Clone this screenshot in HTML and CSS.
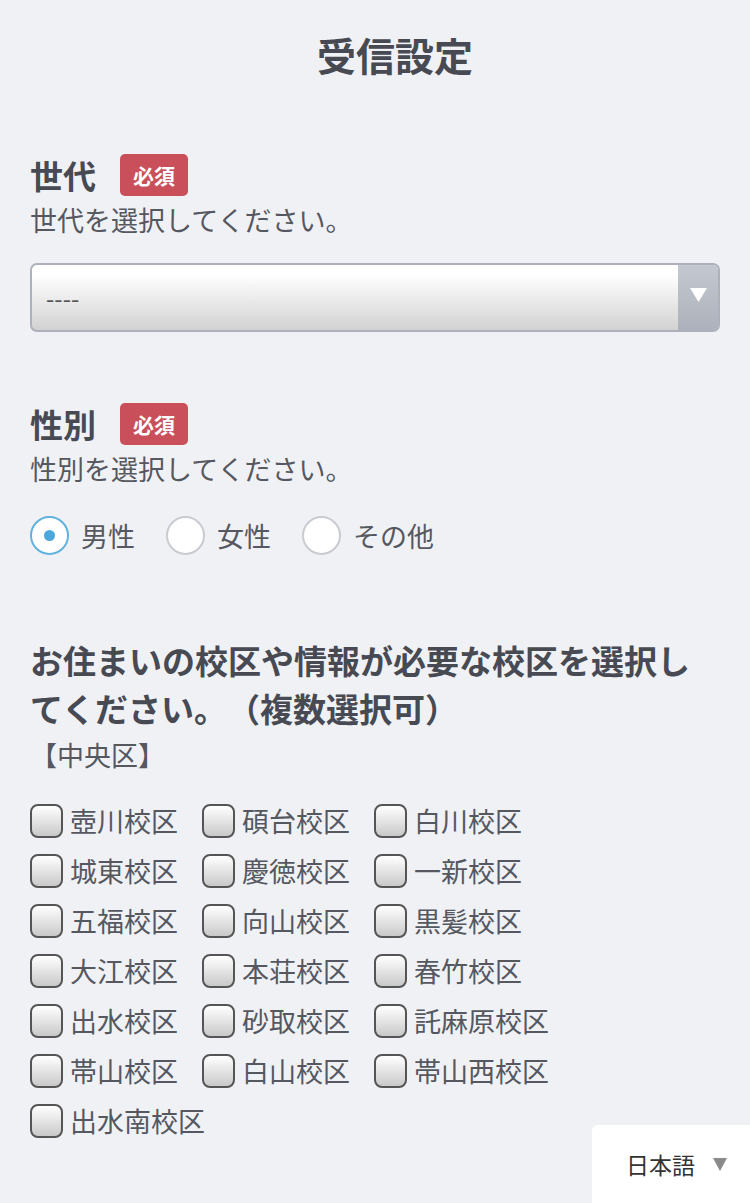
FILE: index.html
```html
<!DOCTYPE html>
<html lang="ja">
<head>
  <meta charset="UTF-8" />
  <title>受信設定</title>
  <link rel="stylesheet" href="styles.css">
</head>
<body>

  <h1 class="title">受信設定</h1>

  <div class="field field-generation">
    <div class="field-head">
      <h2>世代</h2>
      <span class="badge">必須</span>
    </div>
    <p class="note">世代を選択してください。</p>
    <div class="select">
      <span class="select-value">----</span>
      <span class="select-arrow">
        <svg width="17" height="14" viewBox="0 0 17 14"><path d="M0 0 H17 L8.5 14 Z" fill="#fff"/></svg>
      </span>
    </div>
  </div>

  <div class="field field-gender">
    <div class="field-head">
      <h2>性別</h2>
      <span class="badge">必須</span>
    </div>
    <p class="note">性別を選択してください。</p>
    <div class="radios">
      <label class="radio"><span class="radio-mark checked"></span>男性</label>
      <label class="radio"><span class="radio-mark"></span>女性</label>
      <label class="radio"><span class="radio-mark"></span>その他</label>
    </div>
  </div>

  <div class="field field-school">
    <h2 class="long">お住まいの校区や情報が必要な校区を選択してください。（複数選択可）</h2>
    <p class="area">【中央区】</p>
    <div class="checks">
      <label class="check"><span class="box"></span>壺川校区</label>
      <label class="check"><span class="box"></span>碩台校区</label>
      <label class="check"><span class="box"></span>白川校区</label>
      <label class="check"><span class="box"></span>城東校区</label>
      <label class="check"><span class="box"></span>慶徳校区</label>
      <label class="check"><span class="box"></span>一新校区</label>
      <label class="check"><span class="box"></span>五福校区</label>
      <label class="check"><span class="box"></span>向山校区</label>
      <label class="check"><span class="box"></span>黒髪校区</label>
      <label class="check"><span class="box"></span>大江校区</label>
      <label class="check"><span class="box"></span>本荘校区</label>
      <label class="check"><span class="box"></span>春竹校区</label>
      <label class="check"><span class="box"></span>出水校区</label>
      <label class="check"><span class="box"></span>砂取校区</label>
      <label class="check"><span class="box"></span>託麻原校区</label>
      <label class="check"><span class="box"></span>帯山校区</label>
      <label class="check"><span class="box"></span>白山校区</label>
      <label class="check"><span class="box"></span>帯山西校区</label>
      <label class="check"><span class="box"></span>出水南校区</label>
    </div>
  </div>

  <div class="lang">
    <span>日本語</span>
    <svg width="14" height="13" viewBox="0 0 14 13"><path d="M0 0 H14 L7 13 Z" fill="#8a8a8a"/></svg>
  </div>

</body>
</html>
```

FILE: styles.css
```css
body {
  font-family: "Noto Sans CJK JP", "Noto Sans", sans-serif;
  background: #f0f1f5;
  color: #555860;
  margin: 0;
  padding: 0 30px;
  min-height: 1203px;
  box-sizing: border-box;
  text-spacing-trim: space-all;
}

.title {
  margin: 0;
  padding: 29px 0 0 40px;
  font-size: 39px;
  line-height: 50px;
  text-align: center;
  color: #474a53;
  font-weight: bold;
}

.field-generation {
  margin-top: 75px;
}

.field-head {
  display: flex;
  align-items: center;
  height: 42px;
}

h2 {
  margin: 0;
  font-size: 33px;
  line-height: 42px;
  color: #474a53;
  font-weight: bold;
}

.badge {
  margin-left: 24px;
  background: #c9505a;
  color: #fff;
  font-size: 21px;
  font-weight: bold;
  height: 42px;
  line-height: 42px;
  padding: 0 13px;
  border-radius: 5px;
}

.note {
  margin: 6px 0 0;
  font-size: 27px;
  line-height: 36px;
}

.select {
  margin-top: 25px;
  height: 69px;
  box-sizing: border-box;
  border: 2px solid #adb1bb;
  border-radius: 7px;
  background: linear-gradient(#ffffff 15%, #d2d2d2);
  display: flex;
  overflow: hidden;
}

.select-value {
  flex: 1;
  padding-left: 14px;
  font-size: 24px;
  line-height: 65px;
  color: #555;
}

.select-arrow {
  width: 40px;
  background: linear-gradient(#c4c8d0, #adb1bb);
  display: flex;
  justify-content: center;
  padding-top: 23px;
  box-sizing: border-box;
}

.field-gender {
  margin-top: 71px;
}

.radios {
  margin-top: 29px;
  display: flex;
  gap: 31px;
}

.radio {
  display: flex;
  align-items: center;
  gap: 12px;
  font-size: 27px;
  line-height: 39px;
}

.radio-mark {
  width: 39px;
  height: 39px;
  box-sizing: border-box;
  border-radius: 50%;
  border: 2px solid #c9cbd1;
  background: #fff;
  display: flex;
  align-items: center;
  justify-content: center;
}

.radio-mark.checked {
  border-color: #62b1de;
}

.radio-mark.checked::after {
  content: "";
  width: 11px;
  height: 11px;
  border-radius: 50%;
  background: #4ea7da;
}

.field-school {
  margin-top: 81px;
}

.long {
  font-size: 33px;
  line-height: 48px;
}

.area {
  margin: 5px 0 0;
  font-size: 27px;
  line-height: 36px;
}

.checks {
  margin-top: 31px;
  display: grid;
  grid-template-columns: repeat(3, 172px);
  row-gap: 16px;
}

.check {
  display: flex;
  align-items: center;
  gap: 7px;
  font-size: 27px;
  line-height: 34px;
  white-space: nowrap;
}

.box {
  width: 33px;
  height: 34px;
  box-sizing: border-box;
  border: 2px solid #555;
  border-radius: 8px;
  background: linear-gradient(#ffffff, #c9c9c9);
  flex-shrink: 0;
}

.lang {
  position: fixed;
  right: 0;
  bottom: 0;
  width: 158px;
  height: 78px;
  box-sizing: border-box;
  background: #fff;
  border-top-left-radius: 6px;
  display: flex;
  align-items: center;
  padding-left: 34px;
  gap: 18px;
  font-size: 23px;
  color: #333;
}
```
